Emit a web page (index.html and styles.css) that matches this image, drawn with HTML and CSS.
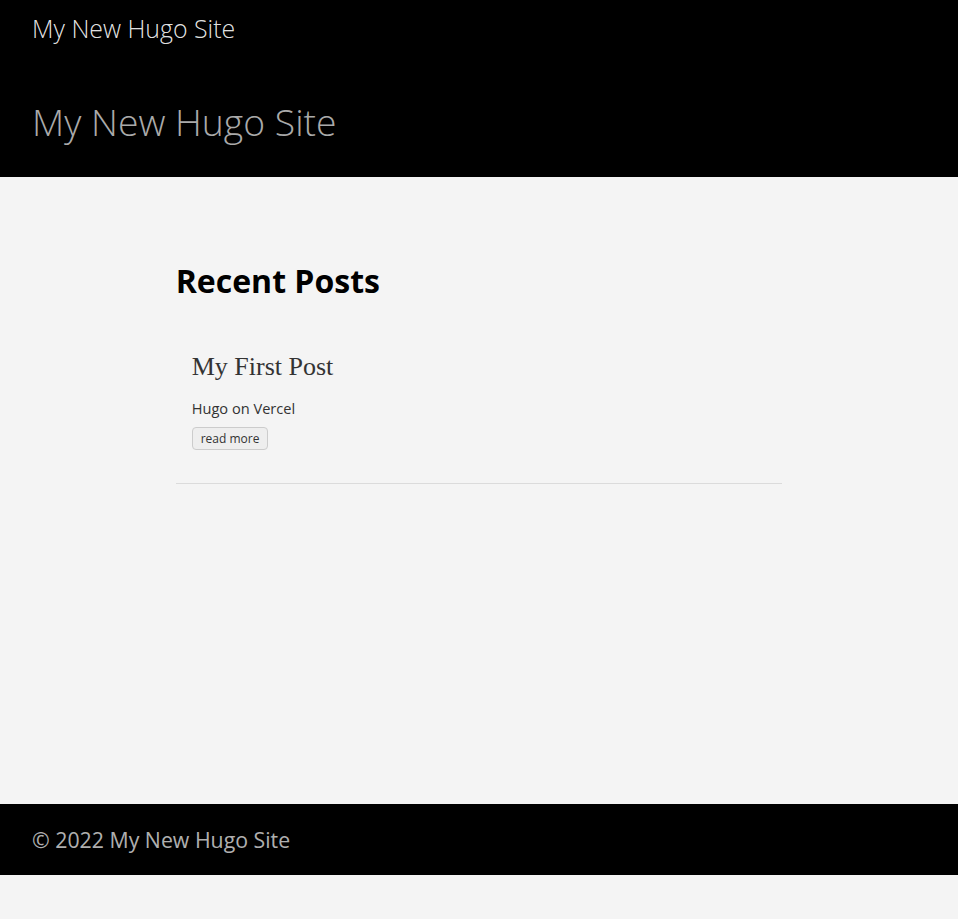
FILE: index.html
```html
<!DOCTYPE html>
<html lang="en">
<head>
<meta charset="utf-8">
<title>My New Hugo Site</title>
<link rel="stylesheet" href="styles.css">
</head>
<body>
<header class="site-header">
  <nav class="nav">
    <a href="/" class="nav-title">My New Hugo Site</a>
  </nav>
  <div class="hero">
    <h1 class="hero-title">My New Hugo Site</h1>
  </div>
</header>
<main class="main">
  <div class="wrap">
    <h1 class="section-title">Recent Posts</h1>
    <section class="posts">
      <article class="post">
        <h1 class="post-title">My First Post</h1>
        <div class="post-summary">Hugo on Vercel</div>
        <a href="#" class="read-more">read more</a>
      </article>
    </section>
  </div>
</main>
<footer class="site-footer">
  <a href="/" class="footer-link">&copy; 2022 My New Hugo Site</a>
</footer>
</body>
</html>
```
FILE: styles.css
```css
html, body {
  margin: 0;
  padding: 0;
}
body {
  background: #f4f4f4;
  font-family: "Open Sans", "Noto Sans", sans-serif;
  color: #000;
}
a { text-decoration: none; }

.site-header {
  background: #000;
  height: 177px;
  box-sizing: border-box;
}
.nav {
  padding: 13px 32px 0;
}
.nav-title {
  display: inline-block;
  font-size: 24.9px;
  font-weight: 300;
  line-height: 30px;
  color: rgba(255,255,255,0.9);
}
.hero {
  padding: 56px 32px 0;
}
.hero-title {
  margin: 0;
  font-size: 37.3px;
  font-weight: 300;
  line-height: 45px;
  color: #aaa;
}

.main {
  height: 627px;
  box-sizing: border-box;
  padding-top: 84px;
}
.wrap {
  width: 70%;
  margin: 0 auto;
  padding: 0 32px;
  box-sizing: border-box;
}
.section-title {
  margin: 0;
  font-size: 32px;
  font-weight: 700;
  line-height: 40px;
  color: #000;
}
.posts {
  margin-top: 51px;
}
.post {
  padding: 0 16px 33px;
  border-bottom: 1px solid rgba(0,0,0,0.1);
}
.post-title {
  margin: 0;
  font-family: Georgia, "Liberation Serif", serif;
  font-size: 26px;
  font-weight: 400;
  line-height: 30px;
  color: #333;
}
.post-summary {
  margin-top: 14px;
  font-size: 14.6px;
  line-height: 24px;
  color: #333;
}
.read-more {
  display: block;
  width: fit-content;
  margin-top: 7px;
  padding: 4px 8px;
  font-size: 12px;
  line-height: 13px;
  color: #333;
  background: #eee;
  border: 1px solid #ccc;
  border-radius: 4px;
}

.site-footer {
  background: #000;
  padding: 16px;
}
.footer-link {
  display: inline-block;
  padding: 8px 16px;
  font-size: 21.3px;
  line-height: 23px;
  color: rgba(255,255,255,0.7);
}
```
